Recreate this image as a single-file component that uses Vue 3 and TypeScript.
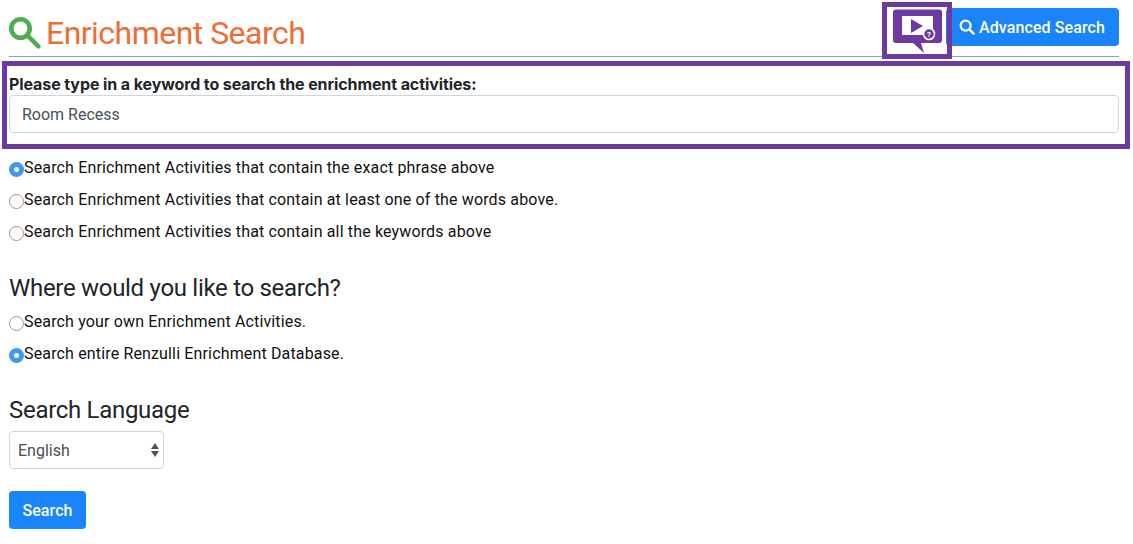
<script setup lang="ts">
const matchOptions = [
  { label: 'Search Enrichment Activities that contain the exact phrase above', checked: true },
  { label: 'Search Enrichment Activities that contain at least one of the words above.', checked: false },
  { label: 'Search Enrichment Activities that contain all the keywords above', checked: false }
];
const whereOptions = [
  { label: 'Search your own Enrichment Activities.', checked: false },
  { label: 'Search entire Renzulli Enrichment Database.', checked: true }
];
</script>

<template>
  <div class="page">
    <header class="head">
      <h1 class="title">
        <svg class="title-icon" viewBox="0 0 32 32" width="32" height="32">
          <circle cx="11.5" cy="11.5" r="9.2" fill="none" stroke="#4cae4f" stroke-width="4.6" />
          <path d="M18.5 18.5 L29.4 29.4" stroke="#4cae4f" stroke-width="4.4" stroke-linecap="round" />
        </svg>
        Enrichment Search
      </h1>
      <div class="head-right">
        <div class="video-box">
          <svg viewBox="0 0 60 47" width="60" height="47">
            <rect x="0" y="0" width="59" height="47" fill="#fff" />
            <path d="M9 2.5 H52 Q55 2.5 55 5.5 V33 Q55 36 52 36 H34 L37 46 L26 36 H9 Q6 36 6 33 V5.5 Q6 2.5 9 2.5 Z" fill="#6f3a9f" />
            <rect x="15" y="9" width="31" height="19" fill="#fff" />
            <path d="M24 12 L36 19 L24 26 Z" fill="#6f3a9f" />
            <circle cx="42" cy="27" r="5.5" fill="#6f3a9f" stroke="#fff" stroke-width="1.6" />
            <text x="42" y="30" class="q-mark">?</text>
          </svg>
        </div>
        <button class="btn btn-adv" type="button">
          <svg viewBox="0 0 16 16" width="16" height="16">
            <circle cx="6.6" cy="6.6" r="5" fill="none" stroke="#fff" stroke-width="2.2" />
            <path d="M10.4 10.4 L14.6 14.6" stroke="#fff" stroke-width="2.4" stroke-linecap="round" />
          </svg>
          Advanced Search
        </button>
      </div>
    </header>

    <section class="keyword-box">
      <label class="keyword-label">Please type in a keyword to search the enrichment activities:</label>
      <input class="keyword-input" type="text" value="Room Recess" />
    </section>

    <div class="radios radios-first">
      <label v-for="opt in matchOptions" :key="opt.label" class="radio-row">
        <input type="radio" name="match" :checked="opt.checked" />{{ opt.label }}
      </label>
    </div>

    <h2 class="sub sub-where">Where would you like to search?</h2>
    <div class="radios">
      <label v-for="opt in whereOptions" :key="opt.label" class="radio-row">
        <input type="radio" name="where" :checked="opt.checked" />{{ opt.label }}
      </label>
    </div>

    <h2 class="sub sub-lang">Search Language</h2>
    <div class="select">
      <span>English</span>
      <svg viewBox="0 0 8 14" width="8" height="14">
        <path d="M4 0 L8 6 H0 Z M4 14 L0 8 H8 Z" fill="#4d5359" />
      </svg>
    </div>
    <button class="btn btn-search" type="button">Search</button>
  </div>
</template>

<style scoped>
.page {
  width: 1133px;
  height: 544px;
  box-sizing: border-box;
  padding: 0 14px 0 9px;
  font-family: Roboto, Inter, "Liberation Sans", sans-serif;
  font-size: 16px;
  color: #212529;
  background: #fff;
  overflow: hidden;
}
.head {
  display: flex;
  justify-content: space-between;
  height: 57px;
  box-sizing: border-box;
  border-bottom: 1px solid #5fb4d0;
}
.title {
  margin: 14px 0 0;
  display: flex;
  align-items: center;
  gap: 5px;
  height: 38px;
  font-size: 32px;
  font-weight: 400;
  letter-spacing: -0.53px;
  color: #ef6c35;
}
.title-icon {
  flex: none;
}
.head-right {
  display: flex;
  align-items: flex-start;
}
.video-box {
  box-sizing: border-box;
  width: 70px;
  height: 57px;
  margin: 2px -6px 0 0;
  border: 5px solid #6f3a9f;
  position: relative;
  z-index: 1;
  overflow: hidden;
}
.video-box svg {
  display: block;
}
.q-mark {
  font-size: 8px;
  font-weight: 700;
  fill: #fff;
  text-anchor: middle;
}
.btn {
  box-sizing: border-box;
  height: 38px;
  border: 0;
  border-radius: 4px;
  background: #1a85fb;
  color: #fff;
  font: inherit;
  font-size: 16px;
  font-weight: 500;
  letter-spacing: 0.1px;
}
.btn-adv {
  display: flex;
  align-items: center;
  gap: 4px;
  width: 173px;
  margin-top: 8px;
  padding: 0 0 0 13px;
}
.keyword-box {
  box-sizing: border-box;
  margin: 4px -11px 0 -7px;
  height: 88px;
  border: 5px solid #6f3a9f;
  padding: 8px 6px 0 2px;
}
.keyword-label {
  display: block;
  height: 21px;
  line-height: 20px;
  font-family: Inter, Roboto, sans-serif;
  font-weight: 700;
  font-size: 16px;
  letter-spacing: -0.1px;
}
.keyword-input {
  display: block;
  box-sizing: border-box;
  width: 100%;
  height: 38px;
  margin-top: 0;
  border: 1px solid #ced4da;
  border-radius: 4px;
  padding: 0 12px;
  font: inherit;
  font-size: 16px;
  color: #495057;
}
.radios {
  display: flex;
  flex-direction: column;
}
.radios-first {
  margin-top: 2px;
}
.radio-row {
  display: flex;
  align-items: center;
  height: 32px;
  font-size: 16px;
  letter-spacing: 0.15px;
  color: #111;
}
.radio-row input {
  appearance: none;
  flex: none;
  box-sizing: border-box;
  width: 15px;
  height: 15px;
  margin: 4px 0 0;
  border: 1px solid #9a9a9a;
  border-radius: 50%;
  background: #fff;
}
.radio-row input:checked {
  border: 5px solid #3f97f6;
}
.sub {
  margin: 26px 0 0;
  height: 30px;
  line-height: 30px;
  font-size: 24px;
  font-weight: 400;
  letter-spacing: -0.3px;
  color: #212529;
}
.sub-where {
  margin-bottom: 2px;
}
.sub-lang {
  margin-top: 26px;
}
.select {
  display: flex;
  align-items: center;
  justify-content: space-between;
  box-sizing: border-box;
  width: 155px;
  height: 38px;
  margin-top: 6px;
  padding: 0 4px 0 8px;
  border: 1px solid #ced4da;
  border-radius: 4px;
  font-size: 16px;
  color: #495057;
}
.btn-search {
  display: block;
  width: 77px;
  margin-top: 22px;
}
</style>
